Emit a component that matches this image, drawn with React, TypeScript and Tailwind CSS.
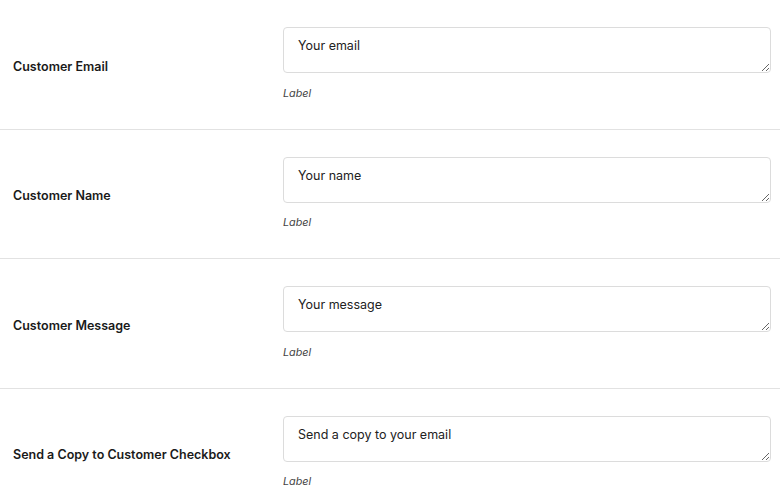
const fields = [
  { title: "Customer Email", value: "Your email" },
  { title: "Customer Name", value: "Your name" },
  { title: "Customer Message", value: "Your message" },
  { title: "Send a Copy to Customer Checkbox", value: "Send a copy to your email" },
];

export default function App() {
  return (
    <div className="min-h-screen bg-white font-['Inter',sans-serif]">
      {fields.map((field) => (
        <div
          key={field.title}
          className="grid grid-cols-[270px_1fr] border-b border-[#e2e2e2] pl-[13px] pr-[9px] pt-[27px] pb-[27px]"
        >
          <div className="flex items-center pt-[6px] text-[12.5px] font-semibold text-[#1a1a1a]">
            {field.title}
          </div>
          <div className="flex flex-col">
            <textarea
              defaultValue={field.value}
              className="block h-[46px] w-full resize-y rounded-[4px] border border-[#dcdcdc] bg-white px-[14px] pt-[8px] text-[12.5px] leading-[20px] text-[#222] outline-none"
            />
            <span className="mt-[12.5px] text-[10.8px] leading-[16px] italic text-[#444]">
              Label
            </span>
          </div>
        </div>
      ))}
    </div>
  );
}
